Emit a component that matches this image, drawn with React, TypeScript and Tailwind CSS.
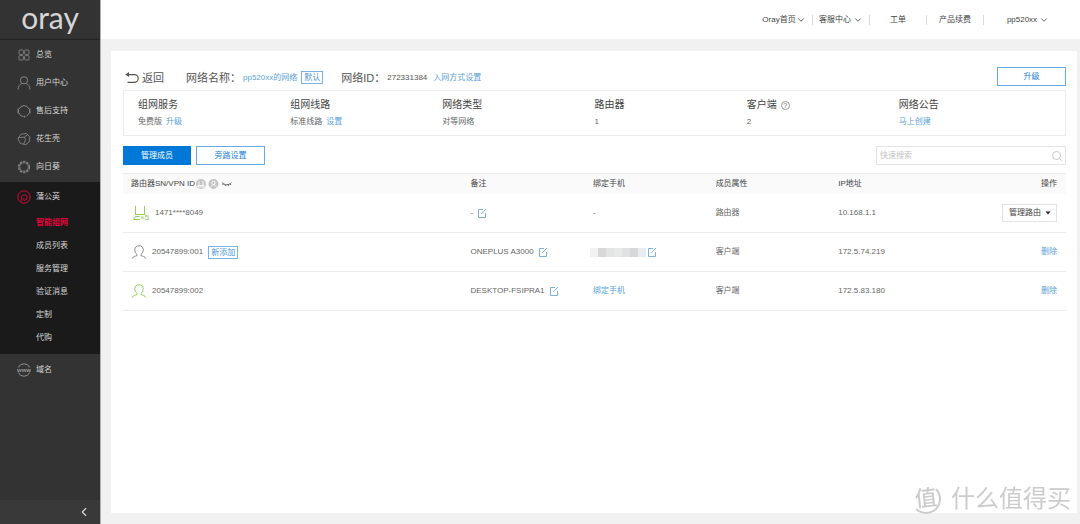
import React from 'react';
import { ChevronDown, ChevronLeft, Search } from 'lucide-react';

interface IconProps {
  className?: string;
}

const OverviewIcon: React.FC<IconProps> = ({ className }) => (
  <svg viewBox="0 0 14 14" className={className} fill="none" stroke="currentColor" strokeWidth="0.9">
    <rect x="2" y="2" width="4.4" height="4.4" rx="1" />
    <rect x="7.6" y="2" width="4.4" height="4.4" rx="1" />
    <rect x="2" y="7.6" width="4.4" height="4.4" rx="1" />
    <rect x="7.6" y="7.6" width="4.4" height="4.4" rx="1" />
  </svg>
);

const AccountIcon: React.FC<IconProps> = ({ className }) => (
  <svg viewBox="0 0 14 14" className={className} fill="none" stroke="currentColor">
    <circle cx="7" cy="4.3" r="3.6" />
    <path d="M1 13.5C1.3 10.2 2.8 8.4 4.8 7.4M13 13.5C12.7 10.2 11.2 8.4 9.2 7.4" />
  </svg>
);

const SupportIcon: React.FC<IconProps> = ({ className }) => (
  <svg viewBox="0 0 14 14" className={className} fill="none" stroke="currentColor">
    <path d="M2 5A5.4 5.4 0 0 1 12 5M2 9A5.4 5.4 0 0 0 6.5 12.6M12 9.2A5.4 5.4 0 0 1 9.6 12" />
    <path d="M1.2 5.2V8.8M12.8 5.2V8.8" strokeWidth="1.4" strokeLinecap="round" />
    <circle cx="7.6" cy="12.7" r=".5" fill="currentColor" />
  </svg>
);

const ShellIcon: React.FC<IconProps> = ({ className }) => (
  <svg viewBox="0 0 14 14" className={className} fill="none" stroke="currentColor" strokeWidth="0.9">
    <path d="M4 2.2L9.5 1.4L12.8 5L12.4 9.6L8.8 12.6L3.6 11.6L1.2 7.6L1.4 5.8Z" strokeLinejoin="round" />
    <path d="M1.4 5.8L7.4 5L10.8 2.4M7.4 5L8.6 7.6L6.6 12.2" />
  </svg>
);

const SunflowerIcon: React.FC<IconProps> = ({ className }) => (
  <svg viewBox="0 0 14 14" className={className} fill="none" stroke="currentColor">
    <circle cx="7" cy="7" r="4.2" strokeWidth="0.8" />
    <circle cx="7" cy="7" r="5.4" strokeWidth="1.5" strokeDasharray="2.4 1" />
  </svg>
);

const DandelionIcon: React.FC<IconProps> = ({ className }) => (
  <svg viewBox="0 0 14 14" className={className} fill="none" stroke="currentColor">
    <circle cx="7" cy="7" r="6.2" />
    <path d="M3 11.6C4.4 11.4 4.8 10.6 4.4 9.2C3.8 6.6 5.2 4.8 7.2 4.8A2.7 2.7 0 0 1 7.6 10.2C6.2 10.2 5.6 9 6.2 8" />
  </svg>
);

const DomainIcon: React.FC<IconProps> = ({ className }) => (
  <svg viewBox="0 0 14 14" className={className} fill="none" stroke="currentColor" strokeWidth="0.9">
    <path d="M1.3 4.5A6.2 6.2 0 0 1 12.7 4.5M1.3 9.5A6.2 6.2 0 0 0 12.7 9.5" />
    <text x="7" y="8.6" textAnchor="middle" fontSize="6" fontWeight="bold" fill="currentColor" stroke="none">www</text>
  </svg>
);

const BackIcon: React.FC<IconProps> = ({ className }) => (
  <svg viewBox="0 0 14 12" className={className} fill="none" stroke="currentColor" strokeWidth="1.2">
    <path d="M1 2.6H9.3A3.9 3.9 0 0 1 9.3 10.4H2.5" />
    <path d="M4 .1V5.100L.4 2.6Z" fill="currentColor" stroke="none" />
  </svg>
);

const EditIcon: React.FC<IconProps> = ({ className }) => (
  <svg viewBox="0 0 10 10" className={className} fill="none" stroke="currentColor" strokeWidth="0.9">
    <path d="M6 1.5H1.5V9.5H8.5V5M4.2 6L9 1" />
  </svg>
);

const ClientIcon: React.FC<IconProps> = ({ className }) => (
  <svg viewBox="0 0 16 16" className={className} fill="none" stroke="currentColor">
    <path d="M6 10.4C4.4 9.2 3.8 7.4 3.8 5.6C3.8 3 5.4 1.8 8 1.8S12.2 3 12.2 5.6C12.2 7.4 11.6 9.2 10 10.4V11.6C11.6 12.4 14 12.2 14.8 14.6M6 10.4V11.6C4.4 12.4 2 12.2 1.2 14.6" />
  </svg>
);

const RouterIcon: React.FC<IconProps> = ({ className }) => (
  <svg viewBox="0 0 18 16" className={className} fill="none" stroke="currentColor">
    <path d="M3.5 1V9.5M12.5 1V9.5M3 9.5H13M3.5 11.5H7.5M3.5 11.5L1.5 14.5H8" />
    <text x="8" y="15" fontSize="8" fill="currentColor" stroke="none">×5</text>
  </svg>
);

const HeaderFilters: React.FC = () => (
  <svg viewBox="0 0 36 10" className="w-9 h-[10px]" fill="none" stroke="white" strokeWidth="0.9">
    <circle cx="5" cy="5" r="5" fill="#c4c4c4" stroke="none" />
    <path d="M3 2V6.5M7 2V6.5M2 6.5H8V8H2Z" />
    <circle cx="17.5" cy="5" r="5" fill="#c4c4c4" stroke="none" />
    <circle cx="17.5" cy="3.8" r="1.7" />
    <path d="M14.5 8.5C15 6.8 16.2 6.2 17.5 5.7C18.8 6.2 20 6.8 20.5 8.5" />
    <path d="M26 3.5C28.5 6.5 33 6.5 35.5 3.5M27.5 4.8L26.5 6M34 4.8L35 6M29.6 5.6L29.2 7M32 5.6L32.4 7" stroke="#555555" />
  </svg>
);

const menu = [
  { label: '总览', icon: OverviewIcon },
  { label: '用户中心', icon: AccountIcon },
  { label: '售后支持', icon: SupportIcon },
  { label: '花生壳', icon: ShellIcon },
  { label: '向日葵', icon: SunflowerIcon },
];

const subMenu = ['智能组网', '成员列表', '服务管理', '验证消息', '定制', '代购'];

const info = [
  { title: '组网服务', value: '免费版', link: '升级' },
  { title: '组网线路', value: '标准线路', link: '设置' },
  { title: '网络类型', value: '对等网络' },
  { title: '路由器', value: '1' },
  { title: '客户端', value: '2', help: true },
  { title: '网络公告', link: '马上创建' },
];

const EditButton: React.FC = () => (
  <button aria-label="编辑" className="text-[#6fa8dc]">
    <EditIcon className="w-[10px] h-[10px]" />
  </button>
);

const Sidebar: React.FC = () => (
  <aside className="w-[101px] shrink-0 flex flex-col bg-[#333333] border-r border-[#b0b0b0] text-[#d6d6d6]">
    <div className="h-10 border-b border-[#222222] flex justify-center">
      <a href="#" className="font-['Lato'] text-[30px] leading-[34px] text-[#d6d6d6]">oray</a>
    </div>
    <nav className="flex-1">
      <div className="py-px">
        {menu.map(({ label, icon: Icon }) => (
          <a key={label} href="#" className="h-7 pl-[17px] flex items-center gap-[5px]">
            <Icon className="w-[14px] h-[14px] text-[#858585]" />
            {label}
          </a>
        ))}
      </div>
      <div className="bg-[#1a1a1a] pt-px pb-[5px]">
        <a href="#" className="h-7 pl-[17px] flex items-center gap-[5px]">
          <DandelionIcon className="w-[14px] h-[14px] text-[#d8093a]" />
          蒲公英
        </a>
        {subMenu.map((label, i) => (
          <a
            key={label}
            href="#"
            className={`h-[23px] pl-9 flex items-center ${i === 0 ? 'text-[#e6003c] font-bold' : ''}`}
          >
            {label}
          </a>
        ))}
      </div>
      <a href="#" className="h-8 pl-[17px] flex items-center gap-[5px]">
        <DomainIcon className="w-[14px] h-[14px] text-[#999999]" />
        域名
      </a>
    </nav>
    <button aria-label="收起" className="h-6 bg-[#393939] flex items-center justify-end pr-[9px]">
      <ChevronLeft size={14} strokeWidth={2} />
    </button>
  </aside>
);

const Divider: React.FC = () => <span className="w-px h-[10px] bg-[#d9d9d9]" />;

const TopBar: React.FC = () => (
  <header className="h-[39px] bg-white flex items-center justify-end text-[#444444]">
    <a href="#" className="w-14 flex items-center justify-center">
      Oray首页 <ChevronDown size={10} strokeWidth={2} />
    </a>
    <Divider />
    <a href="#" className="w-14 flex items-center justify-center gap-[2px]">
      客服中心 <ChevronDown size={10} strokeWidth={2} />
    </a>
    <Divider />
    <a href="#" className="w-14 text-center">工单</a>
    <Divider />
    <a href="#" className="w-14 text-center">产品续费</a>
    <Divider />
    <a href="#" className="w-24 pr-2 flex items-center justify-center gap-[2px]">
      pp520xx <ChevronDown size={10} strokeWidth={2} />
    </a>
  </header>
);

const MemberTable: React.FC = () => (
  <table className="mt-2 w-full table-fixed text-left text-[#666666]">
    <thead>
      <tr className="h-5 bg-[#fafafa] border-t border-[#ececec] text-[#444444]">
        <th className="w-[36%] pl-2 font-normal">
          <div className="flex items-center gap-px">
            路由器SN/VPN ID
            <HeaderFilters />
          </div>
        </th>
        <th className="w-[13%] pl-2 font-normal">备注</th>
        <th className="w-[13%] pl-2 font-normal">绑定手机</th>
        <th className="w-[13%] pl-2 font-normal">成员属性</th>
        <th className="pl-2 font-normal">IP地址</th>
        <th className="w-[12%] pr-[9px] font-normal text-right">操作</th>
      </tr>
    </thead>
    <tbody>
      <tr className="h-[39px] border-b border-[#ececec]">
        <td className="pl-2">
          <div className="flex items-center gap-[5px]">
            <RouterIcon className="w-[18px] h-4 ml-px text-[#8fcf5a]" />
            1471****8049
          </div>
        </td>
        <td className="pl-2">
          <div className="flex items-center gap-1">- <EditButton /></div>
        </td>
        <td className="pl-2">-</td>
        <td className="pl-2">路由器</td>
        <td className="pl-2">10.168.1.1</td>
        <td className="pr-[9px]">
          <div className="relative ml-auto w-[55px]">
            <select
              aria-label="管理路由"
              className="w-full h-[18px] pl-[6px] appearance-none border border-[#e2e2e2] bg-white text-[#444444]"
            >
              <option>管理路由</option>
            </select>
            <svg viewBox="0 0 6 4" className="absolute right-[6px] top-[7px] w-[6px] h-1 pointer-events-none">
              <path d="M.5.5H5.5L3 3.5Z" fill="#222222" />
            </svg>
          </div>
        </td>
      </tr>
      <tr className="h-[39px] border-b border-[#ececec]">
        <td className="pl-2">
          <div className="flex items-center gap-[5px]">
            <ClientIcon className="w-4 h-4 text-[#8a8a8a]" />
            20547899:001
            <span className="h-[13px] px-[2px] leading-[11px] border border-[#7db3e3] text-[#4a97d9]">新添加</span>
          </div>
        </td>
        <td className="pl-2">
          <div className="flex items-center gap-1">ONEPLUS A3000 <EditButton /></div>
        </td>
        <td className="pl-[5px]">
          <div className="flex items-center gap-px">
            <span className="flex">
              <span className="w-2 h-[9px] bg-[#f2f2f2]" />
              <span className="w-2 h-[9px] bg-[#d8d8d8]" />
              <span className="w-2 h-[9px] bg-[#e2e4e4]" />
              <span className="w-2 h-[9px] bg-[#e8e8e8]" />
              <span className="w-2 h-[9px] bg-[#e0e2e3]" />
              <span className="w-2 h-[9px] bg-[#d8d8d8]" />
              <span className="w-2 h-[9px] bg-[#e8edf3]" />
            </span>
            <EditButton />
          </div>
        </td>
        <td className="pl-2">客户端</td>
        <td className="pl-2">172.5.74.219</td>
        <td className="pr-[9px] text-right"><a href="#" className="text-[#5b9fd8]">删除</a></td>
      </tr>
      <tr className="h-[39px] border-b border-[#ececec]">
        <td className="pl-2">
          <div className="flex items-center gap-[5px]">
            <ClientIcon className="w-4 h-4 text-[#8fcf5a]" />
            20547899:002
          </div>
        </td>
        <td className="pl-2">
          <div className="flex items-center gap-1">DESKTOP-FSIPRA1 <EditButton /></div>
        </td>
        <td className="pl-2"><a href="#" className="text-[#5b9fd8]">绑定手机</a></td>
        <td className="pl-2">客户端</td>
        <td className="pl-2">172.5.83.180</td>
        <td className="pr-[9px] text-right"><a href="#" className="text-[#5b9fd8]">删除</a></td>
      </tr>
    </tbody>
  </table>
);

const App: React.FC = () => {
  return (
    <div className="min-h-screen flex bg-[#f1f1f1] font-['Liberation_Sans','Noto_Sans_CJK_SC',sans-serif] text-[8px] leading-3">
      <Sidebar />
      <div className="flex-1 min-w-0 flex flex-col">
        <TopBar />
        <main className="flex-1 mt-3 mb-[11px] ml-[10px] mr-[3px] pt-4 pl-3 pr-[11px] bg-white">
          {/* Network title */}
          <div className="flex items-center justify-between">
            <div className="flex items-center pt-[2px]">
              <a href="#" className="flex items-center gap-[3px] pl-[2px] text-[11px] text-[#555555]">
                <BackIcon className="w-[14px] h-3" /> 返回
              </a>
              <span className="ml-[22px] text-[11px] text-[#555555]">网络名称：</span>
              <a href="#" className="ml-[2px] text-[#5b9fd8]">pp520xx的网络</a>
              <span className="ml-1 h-[13px] px-[2px] leading-[11px] border border-[#7db3e3] text-[#4a97d9]">默认</span>
              <span className="ml-[18px] text-[11px] text-[#555555]">网络ID：</span>
              <span className="ml-[2px] text-[#555555]">272331384</span>
              <a href="#" className="ml-[6px] text-[#5b9fd8]">入网方式设置</a>
            </div>
            <button className="w-[69px] h-[19px] border border-[#6aaae4] text-[#1f7fd6]">升级</button>
          </div>

          {/* Summary */}
          <div className="mt-1 px-[14px] pt-[6px] pb-[5px] grid grid-cols-6 border border-[#ececec]">
            {info.map((item) => (
              <div key={item.title}>
                <div className="flex items-center gap-1 text-[10px] leading-4 text-[#444444]">
                  {item.title}
                  {item.help && (
                    <span className="w-[9px] h-[9px] rounded-full border border-[#999999] text-[7px] leading-[7px] text-center text-[#777777]">?</span>
                  )}
                </div>
                <div className="mt-px flex gap-1 leading-4 text-[#666666]">
                  {item.value}
                  {item.link && <a href="#" className="text-[#5b9fd8]">{item.link}</a>}
                </div>
              </div>
            ))}
          </div>

          {/* Toolbar */}
          <div className="mt-[10px] flex items-center gap-[5px]">
            <button className="w-[68px] h-[19px] bg-[#0078d7] text-white">管理成员</button>
            <button className="w-[69px] h-[19px] border border-[#6aaae4] text-[#1f7fd6]">旁路设置</button>
            <label className="ml-auto w-[190px] h-[19px] pl-[3px] pr-[2px] flex items-center border border-[#e4e4e4]">
              <input
                type="text"
                aria-label="快速搜索"
                placeholder="快速搜索"
                className="flex-1 min-w-0 outline-none placeholder:text-[#c4c4c4]"
              />
              <Search size={12} strokeWidth={2} className="text-[#c8c8c8]" />
            </label>
          </div>

          <MemberTable />
        </main>
      </div>

      {/* Watermark */}
      <div className="fixed right-[9px] bottom-[10px] flex items-center gap-[10px] text-[#cccccc] pointer-events-none">
        <span className="w-[30px] h-[30px] rounded-full border-2 border-[#cccccc] border-t-transparent border-l-transparent flex items-center justify-center text-[22px] leading-6 font-medium">
          <span className="-rotate-6">值</span>
        </span>
        <span className="text-[24px] leading-[30px]">什么值得买</span>
      </div>
    </div>
  );
};

export default App;
